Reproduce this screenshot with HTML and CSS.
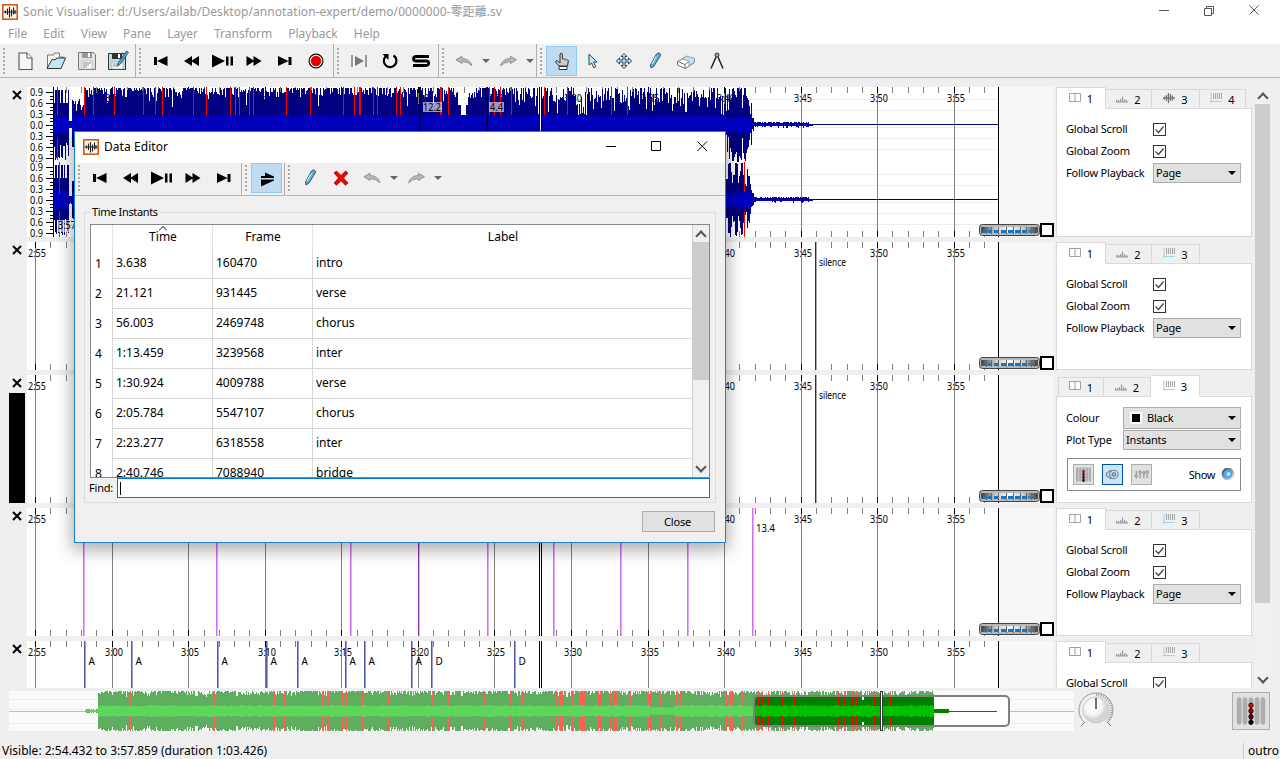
FILE: index.html
```html
<!DOCTYPE html>
<html lang="en">
<head>
<meta charset="utf-8">
<title>Sonic Visualiser</title>
<link rel="stylesheet" href="styles.css">
</head>
<body>
<svg class="defs" width="0" height="0" aria-hidden="true">
  <defs>
    <radialGradient id="knob" cx="38%" cy="35%"><stop offset="0" stop-color="#fff"/><stop offset=".7" stop-color="#f4f4f4"/><stop offset="1" stop-color="#d4d4d4"/></radialGradient>
    <linearGradient id="wheelg"><stop offset="0" stop-color="#444"/><stop offset=".25" stop-color="#ccc"/><stop offset=".5" stop-color="#fafafa"/><stop offset=".75" stop-color="#ccc"/><stop offset="1" stop-color="#444"/></linearGradient>
    <linearGradient id="ledring" x2="1" y2="1"><stop offset="0" stop-color="#444"/><stop offset="1" stop-color="#eee"/></linearGradient>
  </defs>
  <symbol id="i-app" viewBox="0 0 16 16"><rect x=".8" y=".8" width="14.4" height="14.4" fill="#fff6ee" stroke="#d2510d" stroke-width="1.5"/><path d="M1.500 8h13M3.500 6.500v3M5.500 4.500v6.500M7.500 3v10.500M9.500 5.500v7M11.500 3.500v7M13 6v4" stroke="#222" stroke-width="1.100"/></symbol>
  <symbol id="i-new" viewBox="0 0 24 24"><path d="M6 4h8l5 5v11.500H6z" fill="#f7f7f7" stroke="#555" stroke-width="1.1"/><path d="M14 4v5h5" fill="#fff" stroke="#555"/></symbol>
  <symbol id="i-open" viewBox="0 0 24 24"><path d="M3.500 19V6h6l1-2h5v4h4v3" fill="#f5f5f5" stroke="#777"/><path d="M3 19.500l5-9 3 .3 2-1.800h8.500l-4.500 10.500z" fill="#c0e8f4" stroke="#333"/></symbol>
  <symbol id="i-save" viewBox="0 0 24 24"><path d="M3.500 3.500h15l2 2v15h-17z" fill="#e2e2e2" stroke="#777"/><path d="M7 4h10v5H7z" fill="#999"/><path d="M13 4h2v4h-2z" fill="#fff"/><path d="M7 12h10v8H7z" fill="#fff" stroke="#aaa" stroke-width=".6"/><path d="M8 14h8M8 16h6M8 18h4" stroke="#888"/></symbol>
  <symbol id="i-saveas" viewBox="0 0 24 24"><path d="M2.500 4.500h16l1 1v15h-17z" fill="#b8dce8" stroke="#333"/><path d="M6 5h10v5H6z" fill="#333"/><path d="M12 5h2v4h-2z" fill="#fff"/><path d="M6 13h11v7H6z" fill="#fff" stroke="#999" stroke-width=".6"/><path d="M7 15h7M7 17h5" stroke="#888"/><path d="M20.500 2l2 1.500-8 11.500-3 2 .8-3.500z" fill="#48a8c8" stroke="#235" stroke-width=".7"/></symbol>
  <symbol id="i-start" viewBox="0 0 24 24"><path d="M5 8h3v8H5zM8 12l10.500-5v10z"/></symbol>
  <symbol id="i-rew" viewBox="0 0 24 24"><path d="M4 12l8-5v10zM11 12l8-5v10z"/></symbol>
  <symbol id="i-play" viewBox="0 0 24 24"><path d="M1 5.500L14 12 1 18.500zM15 7.500h2.500v9H15zM19.500 7.500H22v9h-2.500z"/></symbol>
  <symbol id="i-ffwd" viewBox="0 0 24 24"><path d="M19.500 12l-8-5v10zM12.500 12l-8-5v10z"/></symbol>
  <symbol id="i-end" viewBox="0 0 24 24"><path d="M15.500 8h3v8h-3zM15.500 12L5 7v10z"/></symbol>
  <symbol id="i-rec" viewBox="0 0 24 24"><circle cx="12" cy="12" r="6.900" fill="#fff" stroke="#000" stroke-width="1.200"/><circle cx="12" cy="12" r="5.200" fill="#e80000"/></symbol>
  <symbol id="i-loopsel" viewBox="0 0 24 24"><path d="M4 6h2v12H4zM18 6h2v12h-2z" fill="#999"/><path d="M8 7l9 5-9 5z" fill="#777"/></symbol>
  <symbol id="i-loop" viewBox="0 0 24 24"><path d="M15.500 6.500A6.300 6.300 0 1 1 7.500 7.500" fill="none" stroke="#000" stroke-width="2.200"/><path d="M4.500 5h6v6z"/></symbol>
  <symbol id="i-solo" viewBox="0 0 24 24"><path d="M20 7.500H7.500Q4.500 7.500 4.500 9.700T7.500 12H17q2.700 0 2.700 2.300T17 16.500H4" fill="none" stroke="#000" stroke-width="2.800"/></symbol>
  <symbol id="i-undo" viewBox="0 0 24 24"><path d="M4 10.800l6-3.600v2.300q8 .2 10 7.300Q16 12.800 10 12.500v2z" fill="#b8b8b8" stroke="#8c8c8c" stroke-width=".9"/></symbol>
  <symbol id="i-redo" viewBox="0 0 24 24"><path d="M20.500 10.800l-6-3.600v2.300q-8 .2-10 7.300Q8.500 12.800 14.500 12.500v2z" fill="#b8b8b8" stroke="#8c8c8c" stroke-width=".9"/></symbol>
  <symbol id="i-hand" viewBox="0 0 24 24"><path d="M10 14V5q1.300-1.800 2.400 0V10q1-.8 2 .3 1-.6 2 .5 1.400-.4 2 1L17.500 17H9L5.500 13q.2-1.500 1.700-1.400L10 14" fill="#ccc" stroke="#333"/><path d="M9 17.500h8v3H9z" fill="#fff" stroke="#333"/></symbol>
  <symbol id="i-select" viewBox="0 0 24 24"><path d="M8 5l8 8-3.400.1 2.200 4.600-2 1.200-2.300-4.800L8 16z" fill="#bfe6f2" stroke="#345"/></symbol>
  <symbol id="i-move" viewBox="0 0 24 24"><path d="M12 4.500l3 3h-2V11h3.500V9l3.200 3-3.200 3v-2H13v3.500h2l-3 3-3-3h2V13H7.500v2l-3.200-3 3.200-3v2H11V7.500H9z" fill="#bfe6f2" stroke="#345"/></symbol>
  <symbol id="i-pencil" viewBox="0 0 24 24"><path d="M13.500 5l2-1.200 2 1.200-.3 2-6.200 10-3 2-.5-3z" fill="#58b4d0" stroke="#345" stroke-width=".9"/><path d="M13.300 7.500l-4.300 7.500" stroke="#d6f1fa" stroke-width="1.200"/></symbol>
  <symbol id="i-erase" viewBox="0 0 24 24"><path d="M3.500 12.500l9-5 8 2.500v3.500l-9.500 6-7.500-3.500z" fill="#fff" stroke="#555" stroke-width=".8"/><path d="M8.500 10l4-3 8 2.500v3.500L15 17v-4.500z" fill="#bde5ef" stroke="#888" stroke-width=".7"/><path d="M3.500 12.500l7.500 3 4-3M11 15.500v4" fill="none" stroke="#555" stroke-width=".8"/></symbol>
  <symbol id="i-measure" viewBox="0 0 24 24"><path d="M11 8L6 19.500M13 8l5 11.500" stroke="#222" stroke-width="1.500"/><circle cx="12" cy="6" r="2" fill="#aaa" stroke="#333"/></symbol>
  <symbol id="i-follow" viewBox="0 0 24 24"><path d="M6 10h4V6.500l9 4V12H6zM6 13.500h13v1L6 20.500z"/></symbol>
  <symbol id="i-delete" viewBox="0 0 24 24"><path d="M5 7l2.500-2L12 9.500 16.500 5 19 7l-4.500 5 4.500 5-2.500 2.300L12 14.800 7.500 19.300 5 17l4.500-5z" fill="#f00000" stroke="#900" stroke-width=".7"/></symbol>
  <symbol id="i-pane" viewBox="0 0 12 10"><path d="M.5.5h11v8H.5zM6 .500v8" fill="#fff" stroke="#a0a0a0"/></symbol>
  <symbol id="i-ruler" viewBox="0 0 12 10"><path d="M.5 9.500V7M2.500 9.500V7M4.500 9.500V6M6.500 9.500V3.500M8.500 9.500V6M10.500 9.500V7M0 9h12" stroke="#999" stroke-width="1.200"/></symbol>
  <symbol id="i-wave" viewBox="0 0 12 10"><path d="M0 5h12M1.500 3.500v3M3.500 2v6M5.500 0v10M7.500 1v7M9.500 2.500v5" stroke="#777" stroke-width="1.300"/></symbol>
  <symbol id="i-inst" viewBox="0 0 12 10"><path d="M3.500 0v6M5.500 0v6M7.500 0v6M9.500 0v6M11.500 0v6" stroke="#aaa" stroke-width="1.100"/><path d="M1 0v9.500M0 8.500h12" stroke="#9bd5e8"/></symbol>
  <symbol id="i-levels" viewBox="0 0 38 38"><path d="M6.500 7v24M12.700 7v24M19 7v24M25.300 7v24M31.500 7v24" stroke="#adadad" stroke-width="5" stroke-linecap="round"/><path d="M19 12v18" stroke="#200" stroke-width="1.500"/><g stroke="#200"><circle cx="19" cy="13" r="2.300" fill="#f00"/><circle cx="19" cy="19" r="2.300" fill="#b00"/><circle cx="19" cy="25" r="2.300" fill="#600"/><circle cx="19" cy="31" r="2.300" fill="#000"/></g></symbol>
  <symbol id="i-speaker" viewBox="0 0 20 20"><path d="M3.500 8.500l5-3v9l-5-3z" fill="#b8d4dd" stroke="#567" stroke-width=".9"/><circle cx="11.500" cy="10" r="4.500" fill="#cfe0e4" stroke="#567" stroke-width=".9"/><circle cx="11.500" cy="10" r="2" fill="#9bc" stroke="#567" stroke-width=".9"/></symbol>
  <symbol id="i-mixer" viewBox="0 0 20 20"><g fill="#ddd" stroke="#888"><path d="M4.500 6v8M8.500 6v8M12.500 6v8M16 6v8"/><circle cx="4.500" cy="11.500" r="1.300"/><circle cx="8.500" cy="7.500" r="1.300"/><circle cx="12.500" cy="8.500" r="1.300"/><circle cx="16" cy="7.500" r="1.300"/></g></symbol>
</svg>

<div class="app">
  <header class="titlebar">
    <svg class="appicon"><use href="#i-app"/></svg>
    <span class="title">Sonic Visualiser: d:/Users/ailab/Desktop/annotation-expert/demo/0000000-零距離.sv</span>
    <svg class="winbtns" width="120" height="23" viewBox="0 0 120 23" fill="none" stroke="#555"><path d="M0 10.500h10M90.500 5.500l9 9M99.500 5.500l-9 9"/><path d="M45.500 8.500h7v7h-7zM47.500 8V6.500h7v7H53"/></svg>
  </header>
  <nav class="menu">
    <span>File</span><span>Edit</span><span>View</span><span>Pane</span><span>Layer</span><span>Transform</span><span>Playback</span><span>Help</span>
  </nav>
  <div class="toolbar" id="maintools"></div>
  <main class="work">
    <div class="panes" id="panes"></div>
    <div class="props" id="props"></div>
    <div class="vscroll outer"><i class="arrow up"></i><b></b><i class="arrow down"></i></div>
  </main>
  <div class="overview">
    <svg id="over" width="1065" height="40"></svg>
    <svg class="dial" width="40" height="40" viewBox="0 0 40 40"><path d="M8 32A17 17 0 1 1 32 32" fill="none" stroke="#999"/><path d="M5 36l4-4M35 36l-4-4" stroke="#777"/><path d="M20 4.500A15.500 15.500 0 0 1 31 31" fill="none" stroke="#aaa" stroke-width="3" stroke-dasharray="1.200 1.200"/><circle cx="20" cy="20" r="13" fill="url(#knob)" stroke="#c8c8c8"/><path d="M20 8v11" stroke="#555" stroke-width="1.700"/></svg>
    <div class="levelbtn"><svg width="36" height="36"><use href="#i-levels"/></svg></div>
  </div>
  <footer class="status"><span class="visible">Visible: 2:54.432 to 3:57.859 (duration 1:03.426)</span><span class="outro">outro</span></footer>
</div>

<section class="dialog">
  <header class="dtitle">
    <svg class="appicon"><use href="#i-app"/></svg><span>Data Editor</span>
    <svg class="dbtns" width="110" height="30" viewBox="0 0 110 30" fill="none" stroke="#000"><path d="M0 14.500h10M45.500 9.500h9v9h-9zM91.500 9.500l9.500 9.500M101 9.500L91.500 19"/></svg>
  </header>
  <div class="toolbar dtools" id="dtools"></div>
  <div class="dbody">
    <fieldset class="group">
      <legend>Time Instants</legend>
      <div class="tablebox">
        <div class="grid" id="grid"></div>
        <div class="vscroll inner"><i class="arrow up"></i><b></b><i class="arrow down"></i></div>
      </div>
      <div class="find"><label>Find:</label><div class="field"><i></i></div></div>
    </fieldset>
    <div class="actions"><div class="close">Close</div></div>
  </div>
</section>
<script src="app.js"></script>
</body>
</html>
```
FILE: styles.css
```css
* { box-sizing: border-box; }
body { margin: 0; width: 1280px; height: 759px; overflow: hidden; background: #efefef; color: #000; font: 12px/16px "Noto Sans", "Noto Sans CJK TC", sans-serif; position: relative; }
svg { display: block; }
.defs { position: absolute; }
.app { display: flex; flex-direction: column; height: 759px; }
.titlebar { display: flex; height: 23px; background: #fff; align-items: center; color: #999; }
.appicon { width: 16px; height: 16px; margin-left: 2px; }
.title { margin-left: 5px; flex: 1; white-space: nowrap; letter-spacing: .06px; }
.winbtns { margin-right: 1px; }
.menu { display: flex; height: 21px; background: #fff; padding-left: 8px; gap: 16px; color: #999; line-height: 21px; }
.toolbar { display: flex; height: 34px; background: #f0f0f0; border-bottom: 1px solid #b4b4b4; }
.tgroup { display: flex; align-items: center; height: 33px; border-right: 1px solid #b0b0b0; padding-left: 3px; flex: none; }
.tgroup:last-child { border-right: 0; }
.grip { width: 2px; height: 26px; margin-right: 4px; background: repeating-linear-gradient(#aaa 0 2px, transparent 2px 4px); }
.dtools .tgroup { padding-bottom: 2px; height: 32px; }
.tool { width: 31px; height: 30px; display: grid; place-items: center; }
.tool.on { background: #bfdcf3; border: 1px solid #90c8f6; }
.caret { width: 13px; display: grid; place-items: center; }
.caret::after { content: ""; border: 4px solid transparent; border-top-color: #666; border-bottom: 0; }
.work { display: flex; height: 610px; padding-top: 9px; overflow: hidden; }
.panes { display: flex; flex-direction: column; gap: 5px; width: 1056px; }
.pane { display: flex; }
.side { width: 27px; display: flex; flex-direction: column; }
.side svg { margin: 2px 0 0 11px; flex: none; }
.swatch { margin: 4px 0 0 9px; width: 16px; height: 110px; background: #000; }
.pane text, #over text { font: 10px "Noto Sans", sans-serif; fill: #000; }
.props { width: 196px; display: flex; flex-direction: column; gap: 5px; font: 11px/14px "Noto Sans", sans-serif; }
.prop { display: flex; flex-direction: column; flex: none; }
.tabs { display: flex; height: 22px; align-items: flex-end; margin-bottom: -1px; z-index: 1; }
.tab { height: 20px; border: 1px solid #d9d9d9; border-left-width: 0; display: flex; align-items: center; justify-content: center; gap: 6px; background: #f0f0f0; padding-top: 1px; }
.tab:first-child { border-left-width: 1px; }
.tab svg { width: 12px; height: 10px; margin-bottom: 3px; }
.tab.sel { height: 22px; background: #fff; border-bottom-color: #fff; padding-top: 2px; }
.box { flex: 1; background: #fff; border: 1px solid #d9d9d9; padding: 9px 10px 0 9px; }
.box.plot { padding-top: 10px; }
.row { display: flex; height: 22px; align-items: center; justify-content: flex-start; letter-spacing: -.2px; }
.row > label { width: 87px; white-space: nowrap; }
.row.short > label { width: 57px; }
.check { width: 13px; height: 13px; border: 1px solid #333; background: #fff; }
.combo { flex: 1; height: 20px; border: 1px solid #adadad; background: #e1e1e1; display: flex; align-items: center; padding: 0 4px 0 2px; }
.combo::after { content: ""; margin-left: auto; border: 4px solid transparent; border-top: 4.5px solid #000; border-bottom: 0; }
.combo u { width: 12px; height: 12px; border: 2px solid #fff; background: #000; margin: 0 5px 0 4px; }
.row.short .combo.tall { height: 22px; }
.playbox { border: 1px solid #828790; height: 33px; margin: 7px 0 0 1px; display: flex; align-items: center; padding: 0 5px; gap: 8px; }
.mini { width: 21px; height: 21px; border: 1px solid #adadad; background: #e1e1e1; display: grid; place-items: center; }
.mini.on { border-color: #00539c; background: #cce4f7; }
.playbox span { margin-left: auto; margin-right: -2px; letter-spacing: -.4px; }
.vscroll { display: flex; flex-direction: column; background: #f0f0f0; align-items: center; }
.vscroll.outer { width: 15px; margin-left: 3px; }
.vscroll b { background: #cdcdcd; width: 100%; }
.vscroll.outer b { height: 499px; }
.arrow { width: 15px; height: 17px; display: grid; place-items: center; flex: none; }
.arrow::after { content: ""; width: 6px; height: 6px; border: solid #555; border-width: 2px 0 0 2px; transform: translateY(2px) rotate(45deg); }
.arrow.down { margin-top: auto; }
.arrow.down::after { transform: translateY(-2px) rotate(225deg); }
.overview { display: flex; height: 50px; padding: 3px 0 0 9px; }
.dial { margin: -1px 0 0 2px; }
.levelbtn { margin: 1px 0 0 116px; width: 38px; height: 38px; border: 1px solid #adadad; background: #e1e1e1; }
.status { display: flex; height: 21px; align-items: center; padding: 5px 0 0 2px; font-size: 12px; }
.outro { margin-left: auto; border-left: 1px solid #ccc; padding: 0 1px 0 4px; }
.dialog { position: absolute; left: 74px; top: 131px; width: 652px; height: 412px; border: 1px solid #1883d7; background: #f0f0f0; box-shadow: 0 5px 16px 2px rgba(0,0,0,.33); display: flex; flex-direction: column; }
.dtitle { height: 31px; flex: none; background: #fff; display: flex; align-items: center; padding: 0 9px 2px 6px; letter-spacing: .06px; }
.dtitle span { margin-left: 5px; flex: 1; }
.dtools { height: 33px; flex: none; }
.dbody { padding: 9px 9px 0 9px; }
.group { margin: 0; border: 1px solid #dcdcdc; padding: 0 5px 4px; height: 298px; min-width: 0; }
.group legend { font-size: 11px; line-height: 14px; padding: 0 2px; margin-left: 0; height: 14px; letter-spacing: -.35px; }
.tablebox { margin-top: 5px; height: 254px; border: 1px solid #828790; display: flex; justify-content: space-between; background: #fff; overflow: hidden; }
.grid { width: 602px; height: 252px; overflow: hidden; border-right: 1px solid #ccc; }
.tr { display: grid; grid-template-columns: 22px 100px 100px 1fr; height: 30px; line-height: 30px; }
.tr > * { border: solid #d8d8d8; border-width: 0 1px 1px 0; padding-left: 3px; }
.tr > :last-child { border-right: 0; }
.tr > :first-child { border-bottom: 0; padding: 1px 3px 0 0; text-align: center; padding-right: 6px; }
.tr.head { height: 23px; line-height: 24px; }
.tr.head > * { border-bottom: 0; border-right-color: #e5e5e5; text-align: center; padding: 0 0 0 1px; position: relative; }
.sort { position: absolute; left: 47px; top: 2px; width: 6px; height: 6px; border: solid #555; border-width: 1px 0 0 1px; transform: rotate(45deg); }
.vscroll.inner { width: 16px; }
.vscroll.inner b { height: 138px; }
.find { display: flex; height: 20px; align-items: center; font-size: 11px; margin-left: -1px; letter-spacing: -.2px; }
.find label { width: 28px; }
.field { flex: 1; height: 20px; border: 1px solid #0078d7; background: #fff; padding: 3px 2px; }
.field i { display: block; width: 1px; height: 13px; background: #000; }
.actions { display: flex; justify-content: flex-end; margin-top: 8px; padding-right: 1px; }
.close { width: 73px; height: 21px; border: 1px solid #adadad; background: #e1e1e1; text-align: center; font-size: 11px; line-height: 19px; letter-spacing: -.2px; padding-right: 2px; }
```
FILE: app.js
```javascript
const $ = id => document.getElementById(id);
let seed = 11;
const rnd = () => (seed = (seed * 16807) % 2147483647) / 2147483647;
const icon = n => `<svg width="24" height="24"><use href="#i-${n}"/></svg>`;
const tool = n => n === '|' ? '<div class="caret"></div>' : `<div class="tool${n[0] === '*' ? ' on' : ''}">${icon(n.replace('*', ''))}</div>`;
const group = ([w, names]) => `<div class="tgroup" style="width:${w}px"><div class="grip"></div>${names.split(' ').map(tool).join('')}</div>`;
$('maintools').innerHTML = [[136, 'new open save saveas'], [198, 'start rew play ffwd end rec'], [105, 'loopsel loop solo'], [98, 'undo | redo |'], [300, '*hand select move pencil erase measure']].map(group).join('');
$('dtools').innerHTML = [[167, 'start rew play ffwd end'], [43, '*follow'], [300, 'pencil delete undo | redo |']].map(group).join('');

const rect = (x, y, w, h, f, o = 1) => `<rect x="${x}" y="${y}" width="${w}" height="${h}" fill="${f}" opacity="${o}"/>`;
const text = (x, y, s, w) => `<text x="${x}" y="${y}"${w ? ` textLength="${w}" lengthAdjust="spacingAndGlyphs"` : ''}>${s}</text>`;
const OX = 27;

function ticks(h, bottom, lines) {
  let o = '';
  for (let k = 0; k < 63; k++) {
    const x = Math.floor(35.6 + k * 15.31) - OX, major = k % 5 === 0;
    if (major && lines) o += rect(x, 0, 1, h, '#808080');
    o += rect(x, 0, 1, 6, major ? '#000' : '#808080');
    if (bottom) o += rect(x, h - 6, 1, 6, major ? '#000' : '#808080');
  }
  return o;
}
function labels(from) {
  let o = '';
  for (let k = from; k < 13; k++) {
    const t = 175 + k * 5, x = Math.floor(35.6 + k * 76.55) - OX;
    o += text(Math.max(1, x - 7), 15, Math.floor(t / 60) + ':' + String(t % 60).padStart(2, '0'), 18);
  }
  return o;
}
function wheel(h) {
  let o = `<g shape-rendering="auto"><rect x="952.5" y="${h - 12.5}" width="60" height="11" rx="3" fill="#b8b8b8" stroke="#444"/></g><rect x="954" y="${h - 10}" width="57" height="6" fill="#555"/><rect x="955" y="${h - 10}" width="55" height="6" fill="url(#wheelg)"/>`;
  [[956, 3], [961, 3], [967, 4], [974, 5], [981, 5], [988, 5], [995, 4], [1001, 3], [1005, 2]].forEach(([x, w], i) => { o += rect(x, h - 7, w, 3, '#0a78d0', i > 6 ? .6 : 1) + rect(x + w, h - 10, 1, 7, '#666'); });
  return o + `<rect x="1014" y="${h - 13}" width="12" height="12" fill="#fff" stroke="#000" stroke-width="2"/>`;
}
function wave(mid) {
  let outer = '', inner = '', grid = '';
  const amp = x => {
    if (x < 69) return x % 3 === 0 || rnd() < .2 ? 22 : 35;
    if (x < 72) return 4;
    if (x < 84) return 14 + rnd() * 12;
    if (x > 457 && x < 468) return x > 460 && x < 466 ? 10 : 20;
    if (x < 752) {
      const d = x < 515 ? 8 : 15, r = rnd();
      let a = 38 - r * r * d * 1.3;
      if (rnd() < .05) a -= 10;
      if (x > 535 && rnd() < .3) a -= 8;
      return x > 747 ? a - (x - 747) * 4 : a;
    }
    if (x < 754) return 7;
    if (x < 809) return 2 + Math.round(rnd() * 1.5);
    return x < 813 ? 1.5 : 0;
  };
  for (let x = 54; x < 813; x++) {
    const a = Math.min(37, amp(x)), b = Math.min(37, a - rnd() * 4);
    outer += `M${x - OX} ${Math.round(mid - a)}h1V${Math.round(mid + Math.max(1, b))}h-1z`;
    const i = Math.min(a - 1, x > 751 ? 1 : (x > 725 ? 6 : 8) + rnd() * 2.5);
    inner += `M${x - OX} ${Math.round(mid - i)}h1V${Math.round(mid + i)}h-1z`;
  }
  [-26, -15, 2, 13, 24].forEach(d => grid += rect(27, mid + d, 944, 1, '#eee'));
  return { grid, body: `<path d="${outer}" fill="#000080"/><path d="${inner}" fill="#0000c0"/>` + rect(780, mid - 1, 192, 1, '#000080') };
}
function firstPane() {
  const a = wave(38), b = wave(113);
  let o = a.grid + b.grid + ticks(150, true, true) + labels(1) + a.body + b.body;
  [57, 84, 93, 114, 143, 155, 162, 193, 206, 230, 235, 239, 249, 253, 286, 310, 343, 354, 359, 360, 373, 377, 396, 400, 440, 441, 448, 489, 494, 500, 511, 544, 567, 611, 627].forEach(x => o += rect(x - OX, 0, 1, 28, '#f00'));
  [[57, 51, 22], [59, 75, 32], [59, 124, 26], [744, 75, 30], [744, 125, 25]].forEach(([x, y, h]) => o += rect(x - OX, y, 1, h, '#f00'));
  [419, 486].forEach(x => o += rect(x - OX, 0, 2, 44, '#000060'));
  o += rect(396, 15, 19, 10, '#fff', .6) + text(396, 24, '12.2', 18) + rect(462, 15, 15, 10, '#fff', .6) + text(463, 24, '4.4', 13);
  o += rect(0, 0, 27, 150, '#fff') + rect(26, 0, 1, 150, '#000');
  [38, 113].forEach(m => {
    for (let k = -3; k <= 3; k++) {
      o += text(3, Math.round(m + k * 10.9) + (k === -3 ? 4 : 3.5), '0.' + Math.abs(k) * 3, 13) + rect(19, Math.round(m + k * 11), 7, 1, '#000');
      if (k < 3) for (let j = 1; j < 3; j++) o += rect(23, Math.round(m + k * 11 + j * 3.7), 3, 1, '#000');
    }
  });
  return o + rect(30, 133, 24, 12, '#fff', .6) + text(31, 142, '3:57', 18);
}
const silence = rect(788, 0, 1, 128, '#333') + rect(789, 0, 1, 128, '#aaa') + text(792, 24, 'silence', 27);
const pink = [83, 216, 350, 418, 487, 553, 620, 687, 752].map(x => rect(x - OX, 0, 1, 128, x === 418 ? '#9030b0' : '#cf70f8') + rect(x - OX + 1, 0, 1, 128, '#e6a8ff')).join('') + text(729, 24, '13.4', 19);
const blue = [[84, 'A'], [131, 'A'], [217, 'A'], [266, 'A'], [297, 'A'], [345, 'A'], [364, 'A'], [411, 'A'], [431, 'D'], [514, 'D']].map(([x, s]) => rect(x - OX, 0, 1, 47, '#5358a8') + rect(x - OX + 1, 0, 1, 47, '#9ba0d8') + text(x - OX + 4.5, 24, s)).join('');
const content = [firstPane(), silence, silence, pink, blue];
$('panes').innerHTML = [150, 128, 128, 128, 47].map((h, i) => {
  const s = rect(0, 0, 1027, h, '#fff') + rect(972, 0, 55, h, '#f7f7f7') + (i ? ticks(h, i < 4, true) : '') + content[i] + (i ? labels(0) : '')
    + rect(512, 0, 3, h, '#000') + rect(513, 0, 1, h, '#fff') + rect(971, 0, 1, h, '#000') + (i < 4 ? wheel(h) : '');
  return `<div class="pane" style="height:${h}px"><div class="side"><svg width="12" height="12" viewBox="0 0 12 12"><path d="M2 2l8 8M10 2l-8 8" stroke="#000" stroke-width="2"/></svg>${i === 2 ? '<div class="swatch"></div>' : ''}</div><svg width="1027" height="${h}" shape-rendering="crispEdges">${s}</svg></div>`;
}).join('');

const check = '<div class="check"><svg width="11" height="11" viewBox="0 0 11 11"><path d="M1.500 5.500l3 3 5-6" fill="none" stroke="#444" stroke-width="1.300"/></svg></div>';
const general = `<div class="row"><label>Global Scroll</label>${check}</div><div class="row"><label>Global Zoom</label>${check}</div><div class="row"><label>Follow Playback</label><div class="combo">Page</div></div>`;
const plot = `<div class="row short"><label>Colour</label><div class="combo tall"><u></u>Black</div></div><div class="row short"><label>Plot Type</label><div class="combo">Instants</div></div>
<div class="playbox"><div class="mini"><svg width="19" height="19"><use href="#i-levels"/></svg></div><div class="mini on"><svg width="19" height="19"><use href="#i-speaker"/></svg></div><div class="mini"><svg width="19" height="19"><use href="#i-mixer"/></svg></div><span>Show</span><svg width="14" height="14"><circle cx="7" cy="6" r="5.300" fill="#4aa8f8" stroke="url(#ledring)" stroke-width="2"/><circle cx="7.500" cy="6" r="2" fill="#b8e8ff"/></svg></div>`;
$('props').innerHTML = [[149, 'pane ruler wave inst', 0], [128, 'pane ruler inst', 0], [128, 'pane ruler inst', 2], [128, 'pane ruler inst', 0], [128, 'pane ruler inst', 0]].map(([h, names, sel], i) => {
  const w = sel ? [46, 47, 49] : [50, 46, 48, 46];
  return `<div class="prop" style="height:${h + (i ? 0 : 1)}px"><div class="tabs"${sel ? ' style="padding-left:2px"' : ''}>${names.split(' ').map((n, k) => `<div class="tab${k === sel ? ' sel' : ''}" style="width:${w[k]}px"><svg><use href="#i-${n}"/></svg>${k + 1}</div>`).join('')}</div><div class="box${sel ? ' plot' : ''}">${sel ? plot : general}</div></div>`;
}).join('');

const data = [['3.638', '160470', 'intro'], ['21.121', '931445', 'verse'], ['56.003', '2469748', 'chorus'], ['1:13.459', '3239568', 'inter'], ['1:30.924', '4009788', 'verse'], ['2:05.784', '5547107', 'chorus'], ['2:23.277', '6318558', 'inter'], ['2:40.746', '7088940', 'bridge']];
$('grid').innerHTML = '<div class="tr head"><div></div><div><i class="sort"></i>Time</div><div>Frame</div><div>Label</div></div>' + data.map((r, i) => `<div class="tr"><div>${i + 1}</div>${r.map(c => `<div>${c}</div>`).join('')}</div>`).join('');

function overview() {
  let o = '', i = '', red = '';
  for (let x = 76; x < 940; x++) {
    const full = x >= 89 && x < 925;
    let a = full ? Math.min(20, 20.5 - rnd() * rnd() * 7) : (x < 89 ? 1 + Math.round(rnd()) : 2);
    if (x > 851 && x < 855) a = 11;
    if (x > 753 && x < 757) a = 15;
    o += `M${x} ${Math.round(20 - a)}h1V${Math.round(20 + a)}h-1z`;
    const n = full ? (x > 640 && x < 665 ? 3 : 4.5) + rnd() * 1.5 : 1;
    i += `M${x} ${Math.round(20 - n)}h1V${Math.round(20 + n)}h-1z`;
    const dense = (x > 550 && x < 652) || (x > 310 && x < 355) || (x > 825 && x < 851);
    if (full && x < 915 && rnd() < (dense ? .3 : .1)) red += `M${x} 0h1V15h-1zM${x} 25h1V40h-1z`;
  }
  const w = (c1, c2, c3) => `<path d="${o}" fill="${c1}"/><path d="${red}" fill="${c3}"/><path d="${i}" fill="${c2}"/>` + rect(925, 18, 15, 4, c1) + rect(939, 20, 49, 1, c1);
  const grid = [8, 18, 32].map(y => rect(0, y, 1065, 1, '#eee')).join('');
  return `<clipPath id="view"><rect x="745" y="5" width="255" height="30" rx="4"/></clipPath>` + rect(0, 0, 1065, 40, '#fafafa') + grid + rect(0, 20, 1065, 1, '#9cd49c') + w('#5fad5f', '#5dd65d', '#ff5e5a')
    + `<g clip-path="url(#view)">` + rect(744, 4, 257, 32, '#fff') + w('#008000', '#00c000', '#f00') + '</g>'
    + `<rect x="745" y="5" width="255" height="30" rx="4" fill="none" stroke="#808080" stroke-width="2" shape-rendering="auto"/>` + rect(871, 0, 3, 40, '#333') + rect(872, 1, 1, 38, '#fff');
}
$('over').setAttribute('shape-rendering', 'crispEdges');
$('over').innerHTML = overview();
```
